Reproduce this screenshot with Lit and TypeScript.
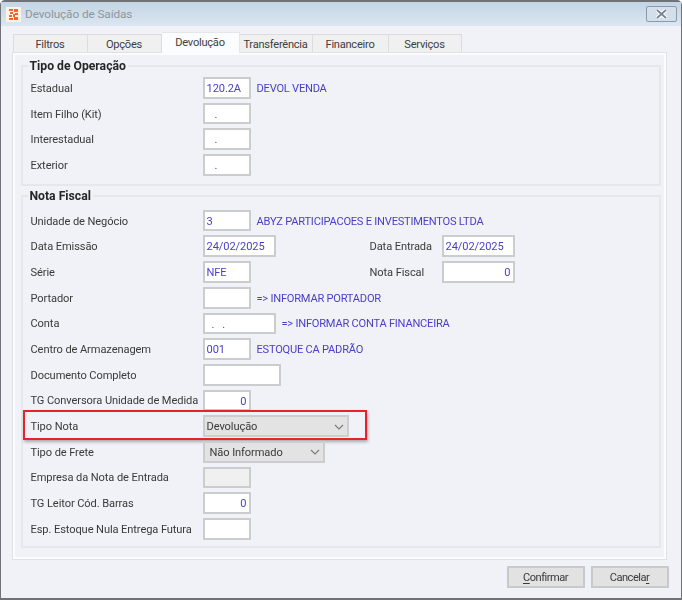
import { LitElement, html, css, nothing } from 'lit';
import { customElement } from 'lit/decorators.js';

type Row = {
  label: string;
  value?: string;
  kind?: 'sm' | 'md' | 'lg' | 'disabled';
  align?: 'right' | 'dot';
  desc?: string;
  extra?: { label: string; value: string; align?: 'right' };
  select?: 'wide' | 'narrow';
  highlight?: boolean;
};

const operacao: Row[] = [
  { label: 'Estadual', value: '120.2A', desc: 'DEVOL VENDA' },
  { label: 'Item Filho (Kit)', value: '.', align: 'dot' },
  { label: 'Interestadual', value: '.', align: 'dot' },
  { label: 'Exterior', value: '.', align: 'dot' },
];

const nota: Row[] = [
  { label: 'Unidade de Negócio', value: '3', desc: 'ABYZ PARTICIPACOES E INVESTIMENTOS LTDA' },
  { label: 'Data Emissão', value: '24/02/2025', kind: 'md', extra: { label: 'Data Entrada', value: '24/02/2025' } },
  { label: 'Série', value: 'NFE', extra: { label: 'Nota Fiscal', value: '0', align: 'right' } },
  { label: 'Portador', desc: '=> INFORMAR PORTADOR' },
  { label: 'Conta', value: '. .', kind: 'md', align: 'dot', desc: '=> INFORMAR CONTA FINANCEIRA' },
  { label: 'Centro de Armazenagem', value: '001', desc: 'ESTOQUE CA PADRÃO' },
  { label: 'Documento Completo', kind: 'lg' },
  { label: 'TG Conversora Unidade de Medida', value: '0', align: 'right' },
  { label: 'Tipo Nota', value: 'Devolução', select: 'wide', highlight: true },
  { label: 'Tipo de Frete', value: 'Não Informado', select: 'narrow' },
  { label: 'Empresa da Nota de Entrada', kind: 'disabled' },
  { label: 'TG Leitor Cód. Barras', value: '0', align: 'right' },
  { label: 'Esp. Estoque Nula Entrega Futura' },
];

const tabs = ['Filtros', 'Opções', 'Devolução', 'Transferência', 'Financeiro', 'Serviços'];

@customElement('app-root')
export class AppRoot extends LitElement {
  static styles = css`
    :host {
      display: block;
      width: 682px;
      height: 600px;
      background: #fff;
      overflow: hidden;
    }

    .window {
      box-sizing: border-box;
      width: 682px;
      height: 600px;
      display: flex;
      flex-direction: column;
      background: #f0f2f8;
      border: 2px solid #6f7377;
      border-width: 2px 1.5px 2px 1.5px;
      border-radius: 5px 5px 0 0;
      font: 11.1px Roboto, 'Noto Sans', sans-serif;
      letter-spacing: -0.1px;
      color: #3a3a3a;
      filter: blur(0.45px);
    }

    .titlebar {
      flex: none;
      height: 24px;
      display: flex;
      align-items: center;
      gap: 4px;
      padding: 0 4.5px 0 5px;
      background: linear-gradient(#c3d4e4, #dbe7f2);
      color: #8f959c;
      font-size: 11.8px;
    }

    .logo {
      width: 15px;
      height: 15px;
      flex: none;
    }

    .title {
      flex: 1;
    }

    .close {
      width: 31px;
      height: 16px;
      box-sizing: border-box;
      border: 1px solid #8c9bab;
      border-radius: 2px;
      display: flex;
      align-items: center;
      justify-content: center;
      background: #d3dfeb;
    }

    .tabs {
      flex: none;
      height: 20px;
      margin: 6px 0 0 11.5px;
      display: flex;
      align-items: flex-end;
      position: relative;
      z-index: 1;
    }

    .tab {
      box-sizing: border-box;
      height: 18px;
      padding-top: 1px;
      display: flex;
      align-items: center;
      justify-content: center;
      background: #f0f0f0;
      border: 1px solid #dcdcdc;
      border-left-width: 0;
      border-bottom: none;
      color: #3e3e3e;
      letter-spacing: -0.25px;
    }

    .tab:first-child {
      border-left-width: 1px;
    }

    .tab.active {
      height: 21px;
      margin-bottom: -1px;
      background: #fbfcfe;
      border-color: #e4e6ea;
      padding: 0 0 1px;
    }

    .panel {
      box-sizing: border-box;
      flex: none;
      width: 655px;
      height: 508px;
      margin-left: 10.5px;
      padding: 6px 5px 0 8px;
      border: 1px solid #e0e1e4;
      box-shadow: inset 0 0 0 2px #fbfcfe;
      display: flex;
      flex-direction: column;
      gap: 3px;
    }

    fieldset {
      margin: 0;
      padding: 4px 8px 8px;
      min-width: 0;
      border: 2px solid #e5e7eb;
      display: flex;
      flex-direction: column;
      gap: 4px;
    }

    fieldset.nota {
      padding-top: 7px;
      padding-bottom: 6px;
    }

    legend {
      margin-left: -3px;
      padding: 0 2px;
      height: 14px;
      line-height: 14px;
      font-weight: 700;
      font-size: 12.2px;
      letter-spacing: 0;
      color: #262626;
    }

    .row {
      position: relative;
      height: 21.7px;
      display: flex;
      align-items: center;
    }

    .label {
      flex: none;
      width: 172px;
      padding-top: 1px;
      white-space: nowrap;
    }

    .slot {
      flex: none;
      width: 167px;
      display: flex;
    }

    .extra-label {
      flex: none;
      width: 72px;
      padding-top: 1px;
      white-space: nowrap;
    }

    .field {
      box-sizing: border-box;
      flex: none;
      width: 48px;
      height: 21.7px;
      padding: 0 2px;
      line-height: 20px;
      background: #fff;
      border: 2px solid #cbccce;
      color: #4a3fc4;
      white-space: nowrap;
      overflow: hidden;
    }

    .field.md {
      width: 73px;
    }

    .field.lg {
      width: 78px;
    }

    .field.disabled {
      background: #f0f0f0;
    }

    .field.right {
      text-align: right;
    }

    .field.dot {
      padding-left: 10px;
    }

    .field.md.dot {
      padding-left: 7px;
      letter-spacing: 2.5px;
    }

    .desc {
      margin-left: 6px;
      padding-top: 1px;
      color: #4a3fc4;
      white-space: nowrap;
      letter-spacing: -0.23px;
    }

    .select {
      box-sizing: border-box;
      flex: none;
      height: 21.7px;
      padding: 1px 3px 0 2px;
      display: flex;
      align-items: center;
      justify-content: space-between;
      background: #e3e3e3;
      border: 2px solid #cdcdcd;
      color: #3a3a3a;
    }

    .select.wide {
      width: 146px;
    }

    .select.narrow {
      width: 122px;
      padding-left: 5px;
    }

    .highlight {
      position: absolute;
      left: -8px;
      top: -5px;
      width: 344px;
      height: 30px;
      box-sizing: border-box;
      border: 2px solid #e8222a;
      box-shadow: 1px 2px 3px rgba(0, 0, 0, 0.3);
      pointer-events: none;
    }

    .footer {
      flex: 1;
      display: flex;
      justify-content: flex-end;
      gap: 6px;
      padding: 6px 12.5px 0 0;
    }

    .btn {
      box-sizing: border-box;
      width: 78px;
      height: 22px;
      display: flex;
      align-items: center;
      justify-content: center;
      background: #e2e2e2;
      border: 2px solid #c8c9cb;
      color: #3a3a3a;
      letter-spacing: -0.5px;
    }

    .btn u {
      text-underline-offset: 2px;
    }
  `;

  renderRow(r: Row) {
    const cls = `field ${r.kind ?? ''} ${r.align ?? ''}`;
    const control = r.select
      ? html`<div class="select ${r.select}">
          <span>${r.value}</span>
          <svg width="10" height="6" viewBox="0 0 10 6"><path d="M1 1l4 4 4-4" fill="none" stroke="#7a7a7a" stroke-width="1.1"/></svg>
        </div>`
      : html`<div class=${cls}>${r.value ?? nothing}</div>`;
    return html`<div class="row">
      <div class="label">${r.label}</div>
      ${r.extra
        ? html`<div class="slot">${control}</div>
            <div class="extra-label">${r.extra.label}</div>
            <div class="field md ${r.extra.align ?? ''}">${r.extra.value}</div>`
        : control}
      ${r.desc ? html`<div class="desc">${r.desc}</div>` : nothing}
      ${r.highlight ? html`<div class="highlight"></div>` : nothing}
    </div>`;
  }

  render() {
    const widths = [75, 74, 78, 73, 76, 73];
    return html`
      <div class="window">
        <div class="titlebar">
          <svg class="logo" viewBox="0 0 15 15">
            <rect width="15" height="15" fill="#fdf1e8"/>
            <path d="M3 2h4v2H3zM8 2h4v3H8zM4 5h3v2H4zM9 6h3v2H9zM3 8h3v2H3zM7 7h2v3H7zM3 11h4v2H3zM8 10h4v3H8z" fill="#ef6a2a"/>
          </svg>
          <div class="title">Devolução de Saídas</div>
          <div class="close">
            <svg width="13" height="10" viewBox="0 0 13 10">
              <path d="M2 1l9 8M11 1l-9 8" stroke="#fff" stroke-width="4"/>
              <path d="M2 1l9 8M11 1l-9 8" stroke="#7a8592" stroke-width="1.8"/>
            </svg>
          </div>
        </div>
        <div class="tabs">
          ${tabs.map(
            (t, i) => html`<div class="tab ${i === 2 ? 'active' : ''}" style="width:${widths[i]}px">${t}</div>`
          )}
        </div>
        <div class="panel">
          <fieldset>
            <legend>Tipo de Operação</legend>
            ${operacao.map(r => this.renderRow(r))}
          </fieldset>
          <fieldset class="nota">
            <legend>Nota Fiscal</legend>
            ${nota.map(r => this.renderRow(r))}
          </fieldset>
        </div>
        <div class="footer">
          <div class="btn"><span><u>C</u>onfirmar</span></div>
          <div class="btn"><span>Cancela<u>r</u></span></div>
        </div>
      </div>
    `;
  }
}
